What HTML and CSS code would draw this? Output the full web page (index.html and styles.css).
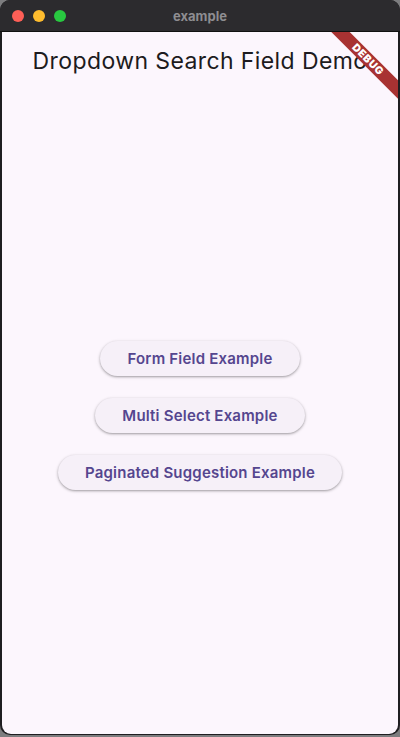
FILE: index.html
```html
<!DOCTYPE html>
<html>
<head>
<meta charset="utf-8">
<link rel="stylesheet" href="styles.css">
</head>
<body>
<div class="window">
  <div class="titlebar">
    <div class="lights">
      <span class="light red"></span>
      <span class="light yellow"></span>
      <span class="light green"></span>
    </div>
    <div class="wintitle">example</div>
  </div>
  <div class="content">
    <header class="appbar">
      <h1 class="apptitle">Dropdown Search Field Demo</h1>
    </header>
    <main class="body">
      <button class="btn">Form Field Example</button>
      <button class="btn">Multi Select Example</button>
      <button class="btn">Paginated Suggestion Example</button>
    </main>
    <div class="banner">DEBUG</div>
  </div>
</div>
</body>
</html>
```
FILE: styles.css
```css
html, body {
  margin: 0;
  padding: 0;
}
body {
  width: 400px;
  height: 737px;
  background: #7d7d7f;
  overflow: hidden;
  font-family: Inter, "Noto Sans", sans-serif;
}
.window {
  height: 735px;
  background: #1f1e21;
  border-radius: 10px;
  padding: 0 2px 1px 2px;
  box-sizing: border-box;
  display: flex;
  flex-direction: column;
  overflow: hidden;
}
.titlebar {
  height: 31px;
  flex: none;
  background: #2c2b2e;
  border-bottom: 1px solid #111;
  position: relative;
  display: flex;
  align-items: center;
  justify-content: center;
  margin: 0 -2px;
}
.lights {
  position: absolute;
  left: 12px;
  top: 10px;
  display: flex;
  gap: 9px;
}
.light {
  width: 12px;
  height: 12px;
  border-radius: 50%;
  display: block;
}
.red { background: #fe5f57; }
.yellow { background: #febc2e; }
.green { background: #28c840; }
.wintitle {
  color: #8e8d91;
  font-size: 13px;
  font-weight: 700;
  margin-top: 1px;
}
.content {
  flex: 1;
  background: #fcf6fd;
  border-radius: 0 0 9px 9px;
  position: relative;
  overflow: hidden;
  display: flex;
  flex-direction: column;
}
.appbar {
  height: 56px;
  flex: none;
  display: flex;
  align-items: center;
  justify-content: center;
}
.apptitle {
  margin: 0;
  font-size: 23px;
  font-weight: 400;
  color: #1d1b20;
  letter-spacing: 0.4px;
  margin-top: 1px;
}
.body {
  flex: 1;
  display: flex;
  flex-direction: column;
  align-items: center;
  justify-content: center;
  gap: 22px;
  padding-top: 8px;
}
.btn {
  height: 35px;
  padding: 0 27px;
  border: none;
  border-radius: 18px;
  background: #f6f0f8;
  color: #55468f;
  font-family: Inter, "Noto Sans", sans-serif;
  font-size: 15px;
  font-weight: 600;
  letter-spacing: 0.2px;
  box-shadow: 0 1px 2px rgba(0,0,0,0.25), 0 1px 3px 1px rgba(0,0,0,0.1);
}
.banner {
  position: absolute;
  right: -30px;
  top: 21px;
  width: 120px;
  height: 13px;
  line-height: 13px;
  background: #a83232;
  color: #fff;
  font-size: 10.5px;
  font-weight: 900;
  text-align: center;
  letter-spacing: 0.6px;
  transform: rotate(45deg);
}
```
